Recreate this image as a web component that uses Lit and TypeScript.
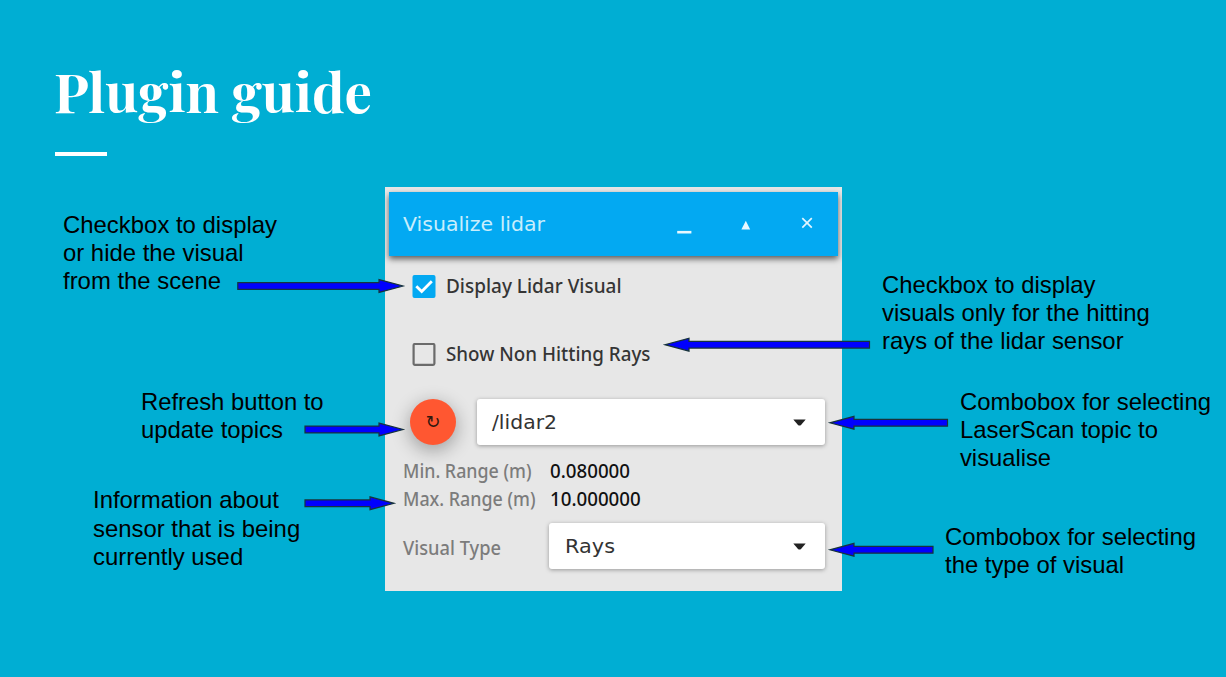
import { LitElement, html, svg, css } from "lit";
import { customElement, property } from "lit/decorators.js";
import { styleMap } from "lit/directives/style-map.js";

// One line of text, set to an exact advance width.
@customElement("fit-text")
class FitText extends LitElement {
  @property() text = "";
  @property({ type: Number }) width = 100;
  static styles = css`
    :host { display: block; line-height: 0; flex: none; }
    svg { display: block; overflow: visible; height: 28px; }
    text { fill: currentColor; }
  `;
  render() {
    return html`<svg width=${this.width} height="28">
      <text x="0" y="22" textLength=${this.width} lengthAdjust="spacingAndGlyphs">${this.text}</text>
    </svg>`;
  }
}

const notes = [
  { x: 63, y: 211, gap: 0, lines: [["Checkbox to display", 214], ["or hide the visual", 180.5], ["from the scene", 158]] },
  { x: 140.6, y: 388, gap: 0, lines: [["Refresh button to", 182.6], ["update topics", 142]] },
  { x: 93.3, y: 486, gap: 0.6, lines: [["Information about", 186], ["sensor that is being", 207.2], ["currently used", 150.2]] },
  { x: 881.6, y: 271, gap: 0, lines: [["Checkbox to display", 213.4], ["visuals only for the hitting", 267.8], ["rays of the lidar sensor", 241.6]] },
  { x: 959.7, y: 388, gap: 0, lines: [["Combobox for selecting", 251], ["LaserScan topic to", 198], ["visualise", 91]] },
  { x: 945, y: 523, gap: 0, lines: [["Combobox for selecting", 251], ["the type of visual", 179]] },
] as { x: number; y: number; gap: number; lines: [string, number][] }[];

// tail x, tip x, centre y
const arrows = [
  [237.8, 403, 286],
  [305, 403, 429.5],
  [305, 394, 503.3],
  [869.5, 665, 344.7],
  [947.5, 830, 422.8],
  [933, 830, 549.8],
];

@customElement("app-root")
class AppRoot extends LitElement {
  static styles = css`
    :host { display: block; }
    .slide {
      position: relative; width: 1226px; height: 677px; overflow: hidden;
      box-sizing: border-box; background: #00aed3;
      font-family: "Liberation Sans", Arial, sans-serif; font-size: 24px; color: #000;
      padding: 60px 0 0 55px;
    }
    .title { margin: 0 0 0 -1.2px; padding-top: 31.4px; height: 61px; box-sizing: border-box; font: 700 54.2px "Playfair Display", "Liberation Serif", serif; color: #fff; }
    .rule { width: 52px; height: 4px; margin-top: 31px; background: #fff; }
    .panel {
      width: 457px; height: 404px; margin: 31px 0 0 330px; overflow: hidden; box-sizing: border-box;
      background: #e7e7e7; padding: 5px 4px 0; display: flex; flex-direction: column;
    }
    .bar {
      height: 64px; box-sizing: border-box; flex: none; background: #03a9f2; color: #c9eefc;
      box-shadow: 0 3px 6px rgba(0,0,0,.6); padding: 0 23px 0 13.6px;
      display: flex; align-items: center; font: 20px "DejaVu Sans", sans-serif;
    }
    .bar fit-text { margin-top: -2px; }
    .controls { margin-left: auto; display: block; }
    .body { padding: 19px 13px 0 13.6px; display: flex; flex-direction: column; font: 500 19.3px "Noto Sans", sans-serif; }
    .check { display: flex; align-items: center; height: 23px; padding-left: 9.4px; gap: 10px; color: #353535; }
    .check + .check { margin-top: 45px; }
    .check svg { display: block; width: 24px; height: 24px; flex: none; }
    .check fit-text { margin-top: -3px; }
    .topic { display: flex; align-items: center; margin-top: 33px; padding-left: 7.4px; gap: 21px; height: 46px; }
    .refresh {
      width: 46px; height: 46px; border-radius: 50%; background: #ff5731; flex: none;
      box-shadow: 0 5px 18px 1px rgba(0,0,0,.3); display: flex; align-items: center; justify-content: center;
      font: 18px/20px "DejaVu Sans", sans-serif; color: #31180f;
    }
    .combo {
      flex: 1; height: 46px; box-sizing: border-box; border-radius: 3px; background: #fff; color: #333;
      box-shadow: 0 1px 4px rgba(0,0,0,.35); display: flex; align-items: center; justify-content: space-between;
      padding: 0 19.5px 0 15.5px; font: 20.3px "DejaVu Sans", sans-serif;
    }
    .combo fit-text { margin-top: -2px; }
    .caret { display: block; }
    .ranges { display: grid; grid-template-columns: 147px auto; margin-top: 10.6px; color: #7c7c7c; }
    .value { color: #111; }
    .type { display: flex; align-items: center; margin-top: 11.8px; }
    .type .name { width: 146.8px; color: #7c7c7c; }
    .type .name fit-text { margin-top: 1px; }
    .note { position: absolute; display: flex; flex-direction: column; }
    .arrows { position: absolute; left: 0; top: 0; }
  `;

  combo(text: string, width: number) {
    return html`<div class="combo">
      <fit-text text=${text} width=${width}></fit-text>
      <svg class="caret" width="13" height="7"><path d="M.3 .5H12.7L8 6Q6.5 7.2 5 6Z" fill="#222" /></svg>
    </div>`;
  }

  arrow([tail, tip, y]: number[]) {
    const neck = tip + (tip > tail ? -24 : 24);
    return svg`<path d="M${tail} ${y - 3.4}H${neck}V${y - 6.4}L${tip} ${y}L${neck} ${y + 6.4}V${y + 3.4}H${tail}Z"
      fill="#0000ff" stroke="#17333c" stroke-width="1.2" />`;
  }

  render() {
    return html`<main class="slide">
      <h1 class="title"><fit-text text="Plugin guide" width="318"></fit-text></h1>
      <div class="rule"></div>
      <section class="panel">
        <header class="bar">
          <fit-text text="Visualize lidar" width="142"></fit-text>
          <svg class="controls" width="138" height="24">
            <path d="M.2 20.2H14.4" stroke="#e9f8ff" stroke-width="2.6" />
            <path d="M68.8 8.8L73.2 17.4H64.4Z" fill="#e9f8ff" />
            <path d="M125.3 6.2L134.8 15.7M134.8 6.2L125.3 15.7" stroke="#e1f5ff" stroke-width="1.7" />
          </svg>
        </header>
        <div class="body">
          <div class="check">
            <svg viewBox="0 0 24 24"><rect x=".5" y="0" width="23" height="23" rx="2" fill="#03a9f2" /><path d="M4.3 11.3L9.7 16.6L19.8 6.3" fill="none" stroke="#fff" stroke-width="2.8" /></svg>
            <fit-text text="Display Lidar Visual" width="175.5"></fit-text>
          </div>
          <div class="check">
            <svg viewBox="0 0 24 24"><rect x="1.6" y="1" width="20.8" height="20.8" rx="1.3" fill="none" stroke="#6b6b6b" stroke-width="2.2" /></svg>
            <fit-text text="Show Non Hitting Rays" width="204.5"></fit-text>
          </div>
          <div class="topic">
            <div class="refresh">↻</div>
            ${this.combo("/lidar2", 65)}
          </div>
          <div class="ranges">
            <fit-text text="Min. Range (m)" width="128.5"></fit-text><fit-text class="value" text="0.080000" width="80"></fit-text>
            <fit-text text="Max. Range (m)" width="132.5"></fit-text><fit-text class="value" text="10.000000" width="90.7"></fit-text>
          </div>
          <div class="type">
            <div class="name"><fit-text text="Visual Type" width="98"></fit-text></div>
            ${this.combo("Rays", 50)}
          </div>
        </div>
      </section>
      ${notes.map((n) => html`<div class="note" style=${styleMap({ left: n.x + "px", top: n.y + "px", gap: n.gap + "px" })}>
        ${n.lines.map(([t, w]) => html`<fit-text text=${t} width=${w}></fit-text>`)}
      </div>`)}
      <svg class="arrows" width="1226" height="677">${arrows.map((a) => this.arrow(a))}</svg>
    </main>`;
  }
}
